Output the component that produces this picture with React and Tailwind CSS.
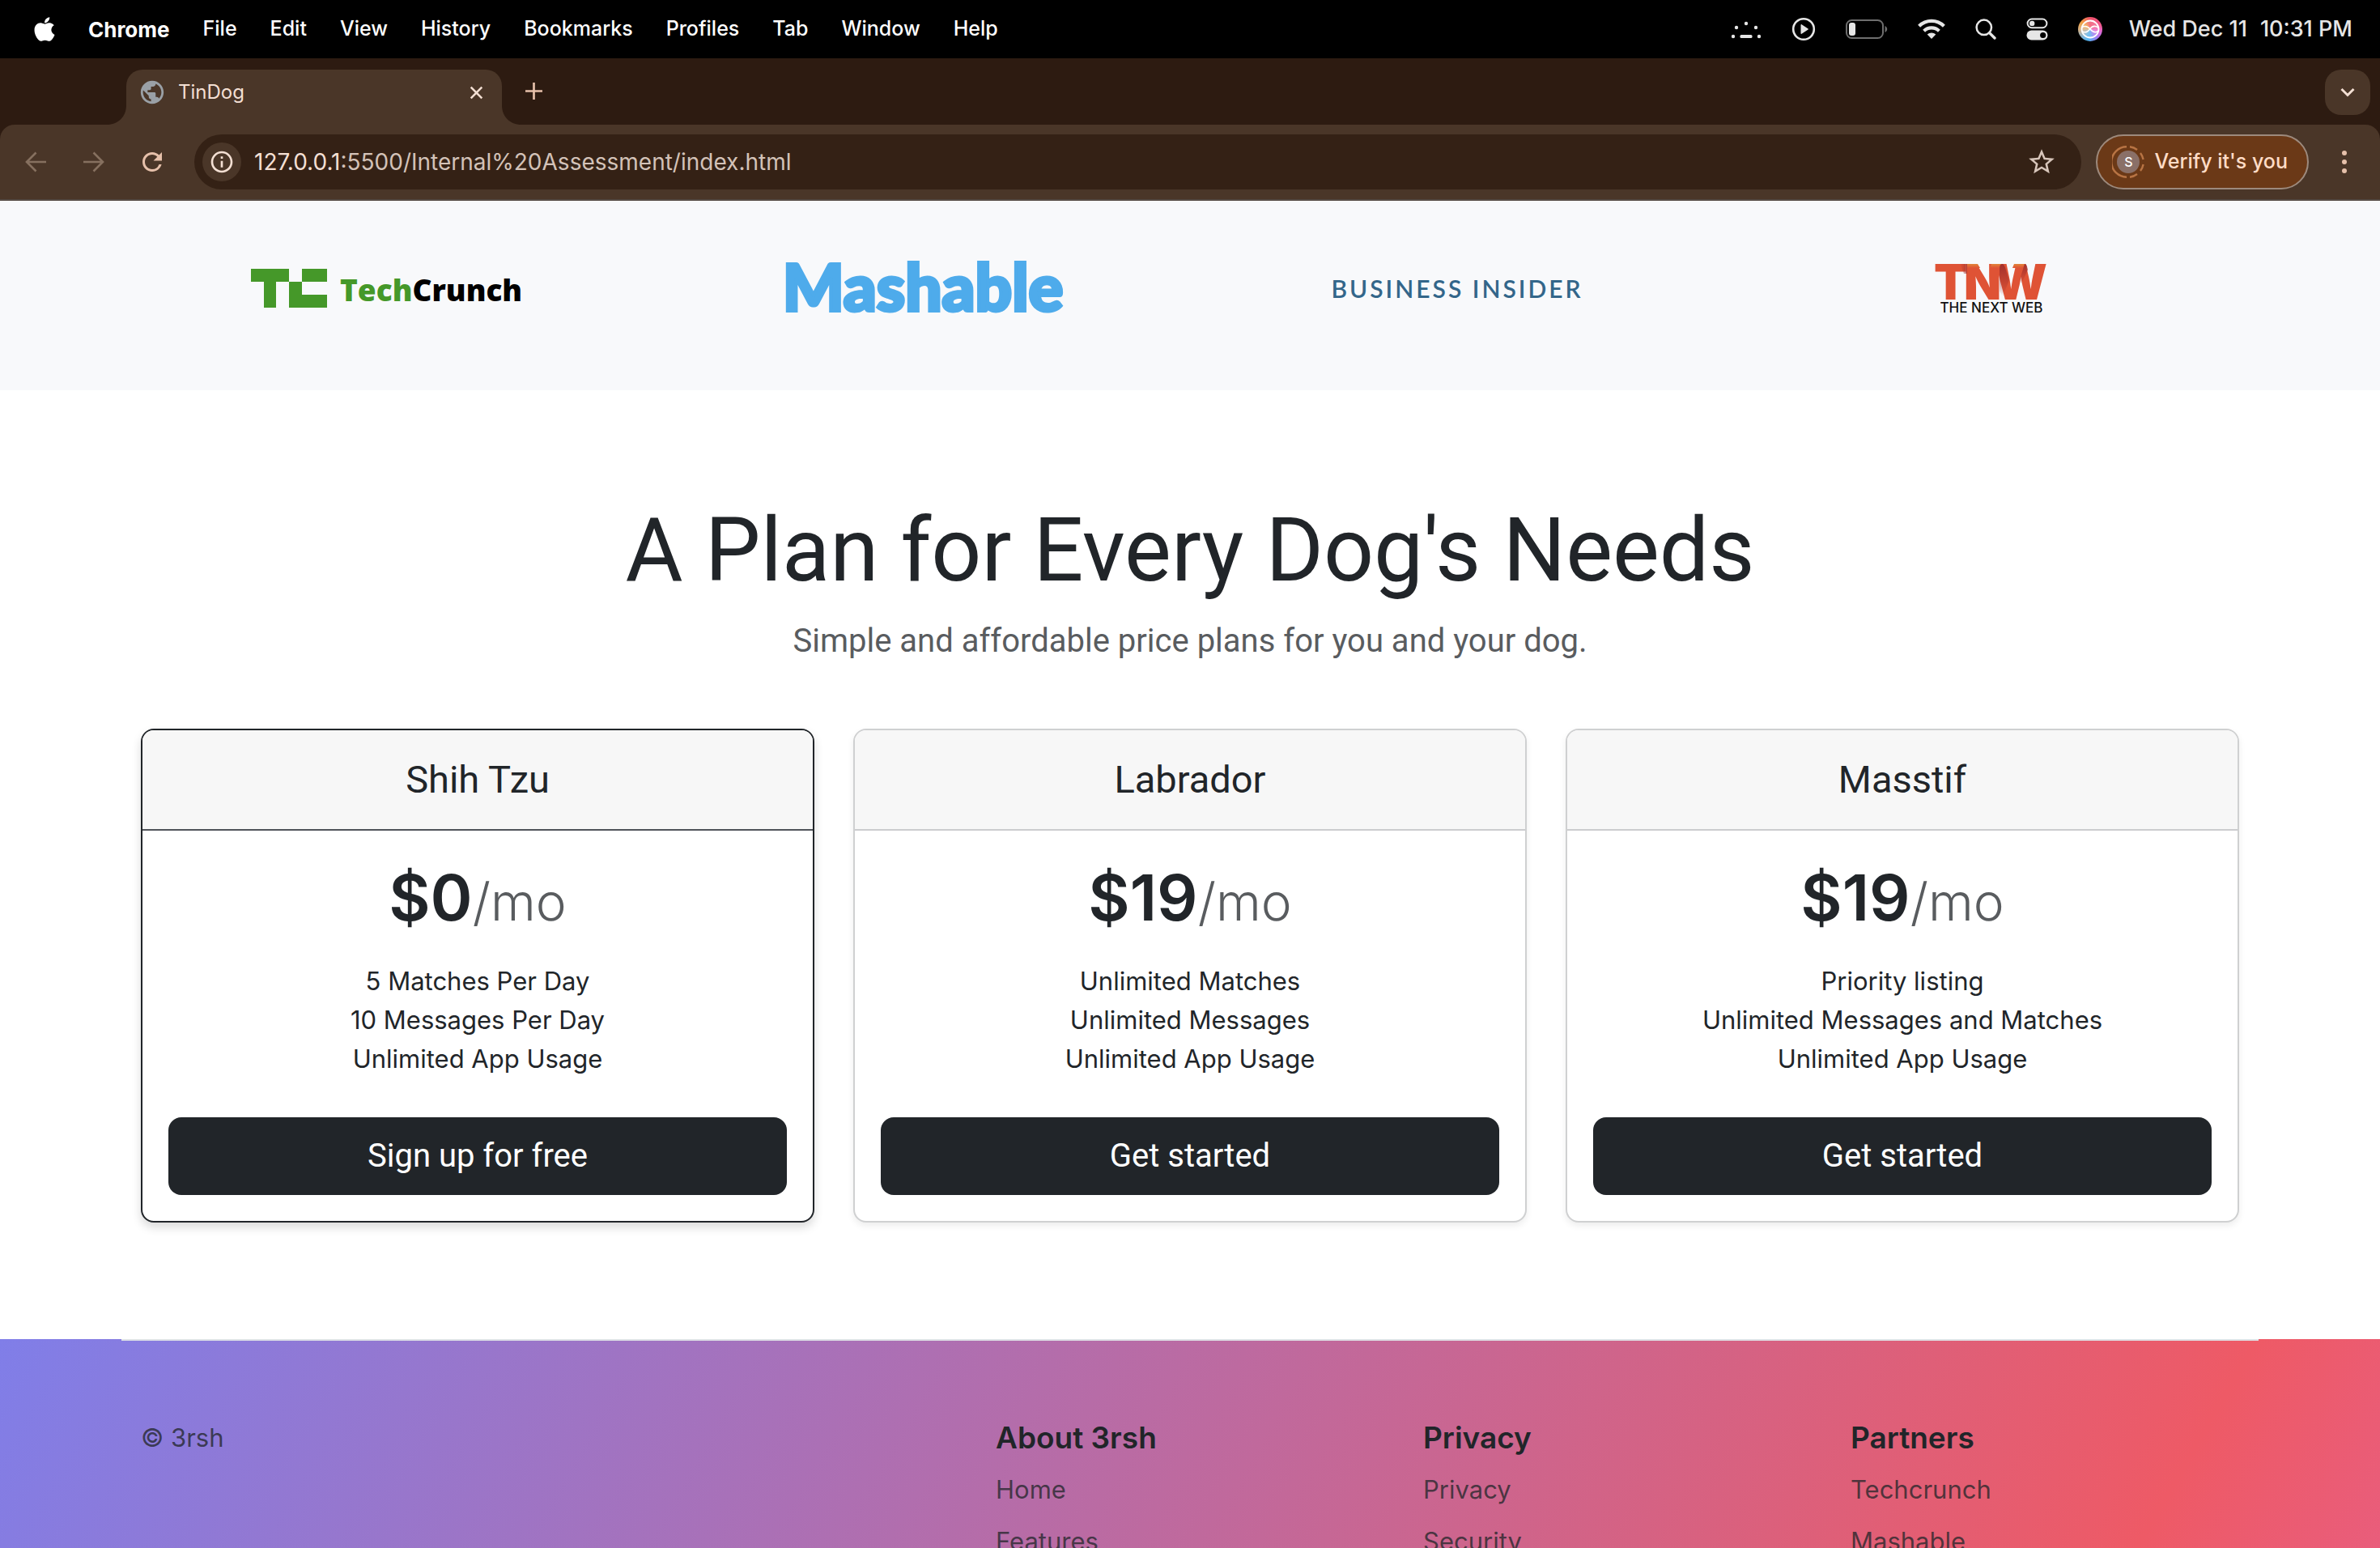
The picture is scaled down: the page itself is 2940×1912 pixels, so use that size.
import React from 'react';
import { FaApple } from 'react-icons/fa';
import { MdPublic, MdInfoOutline, MdRefresh, MdStarBorder } from 'react-icons/md';

const menus = ['File', 'Edit', 'View', 'History', 'Bookmarks', 'Profiles', 'Tab', 'Window', 'Help'];

function DotsIcon() {
  return (
    <svg className="h-10 w-[38px]" viewBox="0 0 38 40" fill="#e6e6e6" aria-hidden="true">
      <circle cx="19" cy="13" r="2.2" />
      <circle cx="7" cy="18" r="2.2" />
      <circle cx="31" cy="18" r="2.2" />
      <circle cx="3" cy="29" r="2.2" />
      <circle cx="35" cy="29" r="2.2" />
      <rect x="11.5" y="27" width="15" height="4" rx="1.5" />
    </svg>
  );
}

function PlayIcon() {
  return (
    <svg className="size-[30px]" viewBox="0 0 30 30" aria-hidden="true">
      <circle cx="15" cy="15" r="12.8" fill="none" stroke="#e6e6e6" strokeWidth="2.6" />
      <path d="M11.5 9.8v10.4c0 .6.6.9 1.1.6l8-5.2c.4-.3.4-.9 0-1.2l-8-5.2c-.5-.3-1.1 0-1.1.6z" fill="#e6e6e6" />
    </svg>
  );
}

function BatteryIcon() {
  return (
    <svg className="h-[26px] w-[52px]" viewBox="0 0 52 26" aria-hidden="true">
      <rect x="1" y="2" width="45" height="22" rx="6.5" fill="none" stroke="#6e6e6e" strokeWidth="2" />
      <rect x="4" y="5" width="8" height="16" rx="3" fill="#e6e6e6" />
      <path d="M48.5 9c3.6 1.4 3.6 6.6 0 8z" fill="#6e6e6e" />
    </svg>
  );
}

function WifiIcon() {
  return (
    <svg className="h-[26px] w-[34px]" viewBox="0 0 34 26" aria-hidden="true">
      <g fill="none" stroke="#e6e6e6" strokeWidth="4.2">
        <path d="M1.6 9.2C10.2.8 23.8.8 32.4 9.2" />
        <path d="M7.6 15.2c5.3-5 13.5-5 18.8 0" />
      </g>
      <path d="M11.7 19.4c3-2.7 7.6-2.7 10.6 0L17 25z" fill="#e6e6e6" />
    </svg>
  );
}

function SearchIcon() {
  return (
    <svg className="size-[26px]" viewBox="0 0 26 26" fill="none" stroke="#e6e6e6" aria-hidden="true">
      <circle cx="10.8" cy="10.8" r="9.2" strokeWidth="2.5" />
      <path d="M17.6 17.6L24 24" strokeWidth="3.4" strokeLinecap="round" />
    </svg>
  );
}

function ControlCentreIcon() {
  return (
    <svg className="h-[28px] w-[27px]" viewBox="0 0 27 28" aria-hidden="true">
      <rect x="1.6" y="1.6" width="23.8" height="10.6" rx="5.3" fill="none" stroke="#e6e6e6" strokeWidth="2" />
      <circle cx="7.2" cy="6.9" r="3.2" fill="#e6e6e6" />
      <rect x=".5" y="15.5" width="26" height="12" rx="6" fill="#e6e6e6" />
      <circle cx="20.7" cy="21.5" r="3.6" fill="#000" />
    </svg>
  );
}

function SiriIcon() {
  return (
    <span className="grid size-[30px] place-items-center rounded-full bg-[conic-gradient(from_0deg,#f0506a,#f05a8c_70deg,#e868d0_100deg,#a078f0_140deg,#50b4f0_190deg,#78b4dc_220deg,#d8b080_270deg,#f0a040_310deg,#f0506a)]">
      <svg className="size-[26px]" viewBox="0 0 26 26" aria-hidden="true">
        <circle cx="13" cy="13" r="10.5" fill="rgba(255,255,255,.18)" stroke="#fff" strokeWidth="1.8" />
        <path d="M3 10.5c4-2 7-1 10 2.5s6 5 10 2.5M3 16c4 2 7.5 0 10-3.5s6-4 10-1.5" fill="none" stroke="#fff" strokeWidth="1.5" />
      </svg>
    </span>
  );
}

function MenuBar() {
  return (
    <header className="flex h-[72px] shrink-0 items-center justify-between bg-black pr-[34px] pl-[38px] text-[25px] font-medium text-white">
      <nav className="flex items-center gap-[41px]" aria-label="Menu bar">
        <FaApple className="-mr-1 size-[34px]" aria-label="Apple menu" />
        <button className="text-[26px] font-bold">Chrome</button>
        {menus.map((m) => (
          <button key={m}>{m}</button>
        ))}
      </nav>
      <div className="flex items-center text-[#e6e6e6]">
        <div className="mr-[33px] flex items-center gap-[37px]">
          <DotsIcon />
          <PlayIcon />
          <BatteryIcon />
          <WifiIcon />
          <SearchIcon />
          <ControlCentreIcon />
          <SiriIcon />
        </div>
        <time className="flex gap-4 text-[27px] whitespace-nowrap">
          <span>Wed Dec 11</span>
          <span>10:31 PM</span>
        </time>
      </div>
    </header>
  );
}

function Flare({ flip }) {
  return (
    <svg className={flip ? 'size-6 -scale-x-100' : 'size-6'} viewBox="0 0 24 24" aria-hidden="true">
      <path d="M24 0v24H0C14 24 24 14 24 0z" fill="#4a3628" />
    </svg>
  );
}

function TabStrip() {
  return (
    <div className="flex h-[82px] shrink-0 items-end bg-[#2d1b11] pl-[132px]">
      <Flare />
      <div className="flex h-[68px] w-[464px] items-center rounded-t-[20px] bg-[#4a3628] pr-[23px] pb-3 pl-[15px]">
        <MdPublic className="size-[34px] text-[#9aa0a6]" aria-hidden="true" />
        <span className="ml-[15px] flex-1 text-[24px] text-[#f3dfd3]">TinDog</span>
        <button aria-label="Close tab">
          <svg className="size-[17px]" viewBox="0 0 20 20" fill="none" stroke="#f3dfd3" strokeWidth="3" aria-hidden="true">
            <path d="M2 2l16 16M18 2L2 18" />
          </svg>
        </button>
      </div>
      <Flare flip />
      <button className="mb-[31px] ml-[5px]" aria-label="New tab">
        <svg className="size-[21px]" viewBox="0 0 22 22" stroke="#e6c0aa" strokeWidth="2.8" aria-hidden="true">
          <path d="M11 0v22M0 11h22" />
        </svg>
      </button>
      <button className="mr-3 mb-3 ml-auto grid size-14 place-items-center rounded-[20px] bg-[#4a3628]" aria-label="Search tabs">
        <svg className="h-3 w-[18px]" viewBox="0 0 18 12" fill="none" stroke="#f3dfd3" strokeWidth="3" aria-hidden="true">
          <path d="M1.5 2L9 9.5 16.5 2" />
        </svg>
      </button>
    </div>
  );
}

function Arrow({ flip }) {
  return (
    <svg className={flip ? 'size-[26px] -scale-x-100' : 'size-[26px]'} viewBox="0 0 26 26" fill="none" stroke="#86705f" strokeWidth="2.6" aria-hidden="true">
      <path d="M26 13H3M13.5 1.5L2 13l11.5 11.5" />
    </svg>
  );
}

function Toolbar() {
  return (
    <div className="shrink-0 bg-[#2d1b11]">
      <div className="flex h-[94px] items-center rounded-t-[18px] border-b-2 border-[#544a43] bg-[#4a3628] pr-[30px] pl-[31px]">
        <div className="mr-[34px] flex items-center gap-[46px]">
          <button aria-label="Back"><Arrow /></button>
          <button aria-label="Forward"><Arrow flip /></button>
          <button aria-label="Reload" className="-ml-[5px]">
            <MdRefresh className="size-[36px] text-[#e6c0aa]" aria-hidden="true" />
          </button>
        </div>
        <div className="flex h-[68px] flex-1 items-center rounded-full bg-[#342115] pr-[30px] pl-2.5">
          <button className="grid size-12 place-items-center rounded-full bg-[#4a3628]" aria-label="Site information">
            <MdInfoOutline className="size-8 text-[#f3dfd3]" aria-hidden="true" />
          </button>
          <div className="ml-4 flex-1 text-[28px] text-[#d3c2b8]">
            <span className="text-[#f3dfd3]">127.0.0.1</span>:5500/Internal%20Assessment/index.html
          </div>
          <button aria-label="Bookmark this page">
            <MdStarBorder className="size-[38px] text-[#d8c6bb]" aria-hidden="true" />
          </button>
        </div>
        <button className="mr-[30px] ml-[18px] flex h-[68px] items-center gap-3 rounded-full border-2 border-[#9d8a7d] bg-[#6b3917] pr-6 pl-[18px] text-[25px] font-medium text-[#ffdcc6]">
          <span className="grid size-10 place-items-center">
            <svg className="col-start-1 row-start-1 size-10" viewBox="0 0 40 40" fill="none" stroke="#b87444" strokeWidth="2.4" aria-hidden="true">
              <path d="M18 1.3A18.7 18.7 0 0 0 18 38.7" />
              <path d="M22 1.3A18.7 18.7 0 0 1 31 5M35 9A18.7 18.7 0 0 1 38.6 17M38.6 23A18.7 18.7 0 0 1 35 31M31 35A18.7 18.7 0 0 1 22 38.7" />
            </svg>
            <span className="col-start-1 row-start-1 grid size-[28px] place-items-center rounded-full bg-[#8a7068] text-[16px] text-white">S</span>
          </span>
          Verify it's you
        </button>
        <button aria-label="Chrome menu">
          <svg className="h-[30px] w-[28px]" viewBox="0 0 28 30" fill="#e6c0aa" aria-hidden="true">
            <circle cx="14" cy="4" r="3" />
            <circle cx="14" cy="15" r="3" />
            <circle cx="14" cy="26" r="3" />
          </svg>
        </button>
      </div>
    </div>
  );
}

function TechCrunchLogo() {
  return (
    <svg className="h-[60px] w-[340px]" viewBox="0 0 340 60" role="img" aria-label="TechCrunch">
      <g fill="#459829">
        <path d="M0 6h47v16H31v32H16V22H0z" />
        <path d="M63 6h31v16H63z" />
        <path d="M47 22h16v16h31v16H47z" />
      </g>
      <text x="110" y="46" fontFamily="'Open Sans', sans-serif" fontWeight="800" fontSize="37" fill="#459829">
        Tech<tspan fill="#000">Crunch</tspan>
      </text>
    </svg>
  );
}

function MashableLogo() {
  return (
    <svg className="h-[60px] w-[352px] overflow-visible" viewBox="0 0 352 60" role="img" aria-label="Mashable">
      <text x="176" y="58" textAnchor="middle" fontFamily="Lato, sans-serif" fontWeight="900" fontSize="80" fill="#4eabeb" stroke="#4eabeb" strokeWidth="4">
        Mashable
      </text>
    </svg>
  );
}

function BusinessInsiderLogo() {
  return <span className="font-[Lato] text-[30px] leading-[60px] font-semibold tracking-widest text-[#33668a]">BUSINESS INSIDER</span>;
}

function NextWebLogo() {
  return (
    <svg className="h-[60px] w-[142px] overflow-visible" viewBox="0 0 142 60" role="img" aria-label="TNW The Next Web">
      <defs>
        <linearGradient id="tnw-fold" x1="0" y1="0" x2="0" y2="1">
          <stop offset="0" stopColor="#e2863a" />
          <stop offset="1" stopColor="#df5335" />
        </linearGradient>
        <linearGradient id="tnw-shade" x1="0" y1="0" x2="0" y2="1">
          <stop offset="0" stopColor="#a3302c" />
          <stop offset="1" stopColor="#a3302c" stopOpacity="0" />
        </linearGradient>
        <linearGradient id="tnw-edge" x1="0" y1="0" x2="1" y2="0">
          <stop offset="0" stopColor="#a3302c" stopOpacity="0" />
          <stop offset="1" stopColor="#a3302c" stopOpacity=".7" />
        </linearGradient>
      </defs>
      <text x="0 37 75" y="44" fontFamily="Inter, sans-serif" fontWeight="900" fontSize="60" fill="#df5335">
        TNW
      </text>
      <path d="M32 0h9v12h-4z" fill="url(#tnw-edge)" />
      <path d="M41 0h13l3 5H41z" fill="url(#tnw-fold)" />
      <path d="M71 0h13l-3 5H69z" fill="url(#tnw-fold)" />
      <path d="M99 0h13l-2 5H97z" fill="url(#tnw-fold)" />
      <path d="M84 0c4 0 4 6 9 20l-8 20-4-6V6c0-4 1-6 3-6z" fill="url(#tnw-shade)" />
      <path d="M112 0c3 0 3 4 4 7l-8 18-2-6z" fill="url(#tnw-shade)" />
      <text x="71" y="60" textAnchor="middle" fontFamily="Inter, sans-serif" fontWeight="500" fontSize="17" fill="#111">
        THE NEXT WEB
      </text>
    </svg>
  );
}

const plans = [
  { name: 'Shih Tzu', price: '$0', lines: ['5 Matches Per Day', '10 Messages Per Day', 'Unlimited App Usage'], cta: 'Sign up for free', dark: true },
  { name: 'Labrador', price: '$19', lines: ['Unlimited Matches', 'Unlimited Messages', 'Unlimited App Usage'], cta: 'Get started' },
  { name: 'Masstif', price: '$19', lines: ['Priority listing', 'Unlimited Messages and Matches', 'Unlimited App Usage'], cta: 'Get started' },
];

function PlanCard({ plan }) {
  return (
    <article
      className={
        plan.dark
          ? 'overflow-hidden rounded-2xl border-2 border-[#212529] bg-white text-center shadow-[0_6px_12px_rgba(0,0,0,0.15)]'
          : 'overflow-hidden rounded-2xl border-2 border-[#cfd0d1] bg-white text-center shadow-[0_4px_8px_rgba(0,0,0,0.075)]'
      }
    >
      <h2
        className={
          plan.dark
            ? 'border-b-2 border-[#50545a] bg-[#f7f7f7] py-8 font-[Roboto,sans-serif] text-[47px] leading-[58px]'
            : 'border-b-2 border-[#cbccce] bg-[#f7f7f7] py-8 font-[Roboto,sans-serif] text-[47px] leading-[58px]'
        }
      >
        {plan.name}
      </h2>
      <div className="p-8">
        <p className="text-[79px] leading-[100px] font-semibold">
          {plan.price}
          <small className="text-[64px] font-light text-[#595c5f]">/mo</small>
        </p>
        <ul className="mt-6 mb-12 text-[31px] leading-12">
          {plan.lines.map((l) => (
            <li key={l}>{l}</li>
          ))}
        </ul>
        <button className="h-24 w-full rounded-2xl bg-[#212529] font-[Roboto,sans-serif] text-[40px] text-white">{plan.cta}</button>
      </div>
    </article>
  );
}

const footerColumns = [
  { title: 'About 3rsh', links: ['Home', 'Features'] },
  { title: 'Privacy', links: ['Privacy', 'Security'] },
  { title: 'Partners', links: ['Techcrunch', 'Mashable'] },
];

function Footer() {
  return (
    <footer className="flex-1 bg-[linear-gradient(120deg,#807ee8_0%,#ee5a66_90%,#e95d7c_100%)]">
      <div className="mx-[150px] grid grid-cols-5 border-t-2 border-[#dee2e6] pt-24 text-[31px] leading-12 text-[#212529]">
        <p className="col-span-2 px-6 text-[#212529]/75">© 3rsh</p>
        {footerColumns.map((c) => (
          <section key={c.title} className="px-6">
            <h3 className="mb-4 text-[37px] font-semibold">{c.title}</h3>
            <ul className="flex flex-col gap-4">
              {c.links.map((l) => (
                <li key={l}>
                  <a href="#" className="text-[#212529]/75">{l}</a>
                </li>
              ))}
            </ul>
          </section>
        ))}
      </div>
    </footer>
  );
}

export default function App() {
  return (
    <div className="flex h-screen flex-col overflow-hidden bg-white font-[Inter,sans-serif] text-[#212529]">
      <MenuBar />
      <TabStrip />
      <Toolbar />
      <main className="flex min-h-0 flex-1 flex-col overflow-hidden">
        <section className="shrink-0 bg-[#f8f9fb] px-[150px] pt-[78px] pb-24">
          <div className="grid h-[60px] grid-cols-4 items-center justify-items-center">
            <TechCrunchLogo />
            <MashableLogo />
            <BusinessInsiderLogo />
            <NextWebLogo />
          </div>
        </section>
        <section className="shrink-0 px-[150px] pt-[130px] pb-36 text-center">
          <h1 className="font-[Roboto,sans-serif] text-[109px] leading-[136px]">A Plan for Every Dog's Needs</h1>
          <p className="mt-3.5 font-[Roboto,sans-serif] text-[40px] leading-[60px] text-[#595c5f]">Simple and affordable price plans for you and your dog.</p>
          <div className="mt-[78px] grid grid-cols-3 gap-12 px-6">
            {plans.map((p) => (
              <PlanCard key={p.name} plan={p} />
            ))}
          </div>
        </section>
        <Footer />
      </main>
    </div>
  );
}
